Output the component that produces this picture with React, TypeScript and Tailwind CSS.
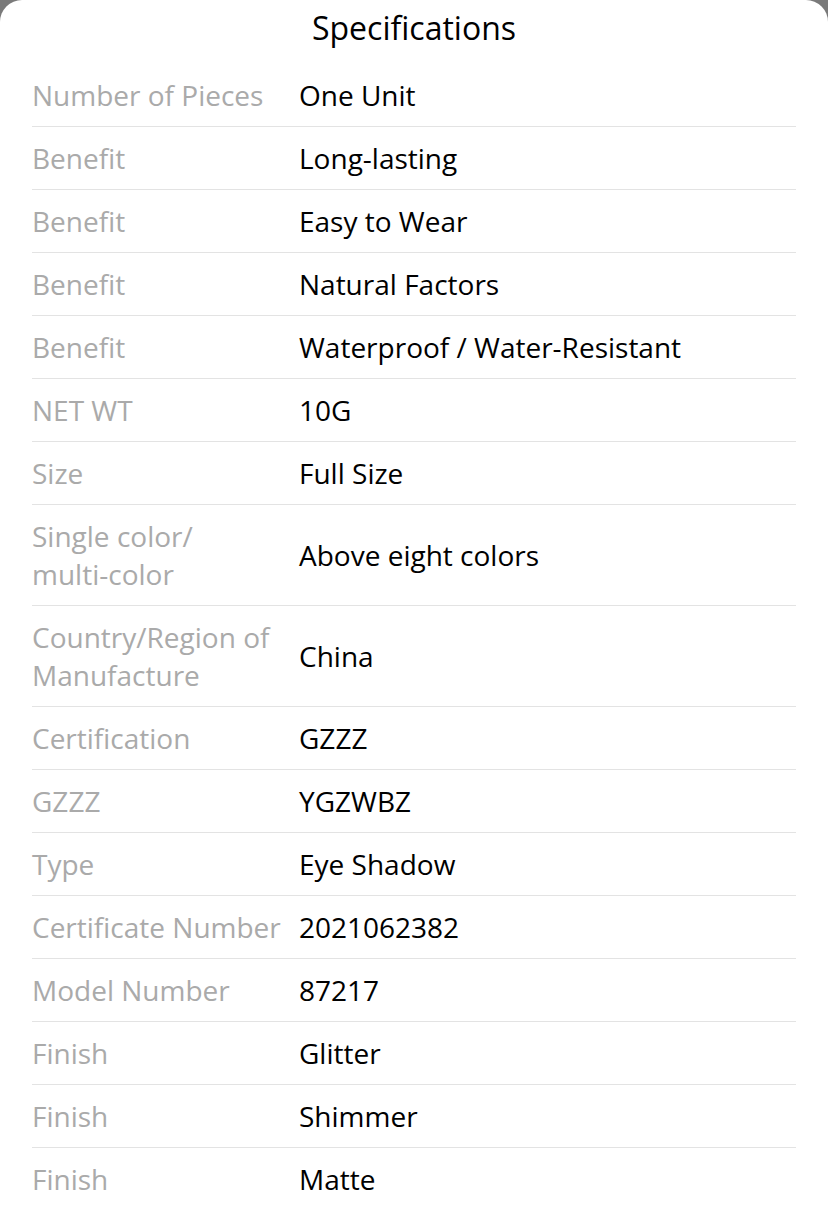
const SPECS: [string, string][] = [
  ['Number of Pieces', 'One Unit'],
  ['Benefit', 'Long-lasting'],
  ['Benefit', 'Easy to Wear'],
  ['Benefit', 'Natural Factors'],
  ['Benefit', 'Waterproof / Water-Resistant'],
  ['NET WT', '10G'],
  ['Size', 'Full Size'],
  ['Single color/ multi-color', 'Above eight colors'],
  ['Country/Region of Manufacture', 'China'],
  ['Certification', 'GZZZ'],
  ['GZZZ', 'YGZWBZ'],
  ['Type', 'Eye Shadow'],
  ['Certificate Number', '2021062382'],
  ['Model Number', '87217'],
  ['Finish', 'Glitter'],
  ['Finish', 'Shimmer'],
  ['Finish', 'Matte'],
];

function Label({ text }: { text: string }) {
  // keep hyphenated words together so wrapping happens at the slash / space
  return (
    <>
      {text.split(' ').map((w, i) => (
        <span key={i} className={w.includes('-') ? 'whitespace-nowrap' : ''}>
          {i > 0 ? ' ' : ''}
          {w}
        </span>
      ))}
    </>
  );
}

export default function App() {
  return (
    <div className="h-[1207px] overflow-hidden bg-[#7a7a7a] font-['Open_Sans',sans-serif]">
      <div className="rounded-t-[22px] bg-white">
        <h1 className="h-[64px] pt-[8px] text-center text-[32px] leading-[40px] text-black">Specifications</h1>
        <div className="px-[32px]">
          {SPECS.map(([label, value], i) => (
            <div
              key={i}
              className="flex items-center gap-[14px] border-b border-[#e3e3e3] py-[12px] text-[28px] leading-[38px]"
            >
              <div className="w-[253px] shrink-0 text-[#aaaaaa]">
                <Label text={label} />
              </div>
              <div className="text-black">{value}</div>
            </div>
          ))}
        </div>
      </div>
    </div>
  );
}
